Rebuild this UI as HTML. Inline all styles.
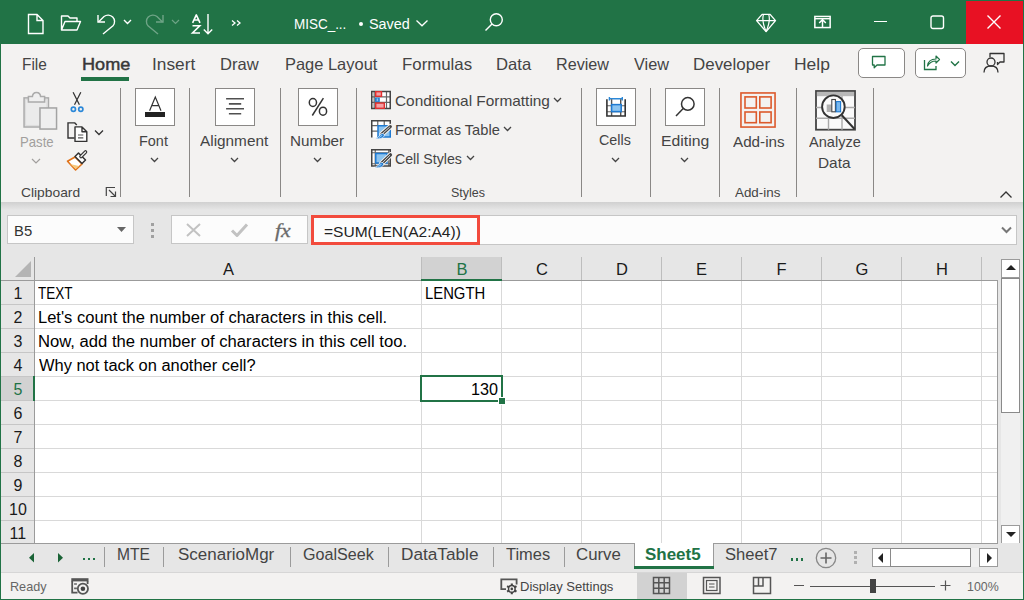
<!DOCTYPE html>
<html><head><meta charset="utf-8"><style>
html,body{margin:0;padding:0;}
body{width:1024px;height:600px;position:relative;overflow:hidden;background:#217346;font-family:"Liberation Sans",sans-serif;}
.t{position:absolute;line-height:1;white-space:nowrap;transform-origin:0 0;}
svg{overflow:visible}
</style></head><body>
<div style="position:absolute;left:0px;top:0px;width:1024px;height:44px;background:#217346"></div>
<svg style="position:absolute;left:27px;top:13px" width="18" height="22" viewBox="0 0 18 22"><path d="M1.5 1.5 H10 L16 7.5 V20.5 H1.5 Z M10 1.5 V7.5 H16" fill="none" stroke="#fff" stroke-width="1.4"/></svg>
<svg style="position:absolute;left:60px;top:14px" width="22" height="18" viewBox="0 0 22 18"><path d="M1.5 16 V2 H8 L10 4 H17 V7.5 M1.5 16 L5 7.5 H20.5 L17 16 Z" fill="none" stroke="#fff" stroke-width="1.4" stroke-linejoin="round"/></svg>
<svg style="position:absolute;left:96px;top:13px" width="21" height="22" viewBox="0 0 21 22"><path d="M2 2 V9 H9" fill="none" stroke="#fff" stroke-width="1.4"/><path d="M2.5 9 L8 3.5 A6.5 6.5 0 0 1 17 12.8 L7 21" fill="none" stroke="#fff" stroke-width="1.4"/></svg>
<svg style="position:absolute;left:123px;top:19px" width="9" height="6" viewBox="0 0 9 6"><path d="M1 1 L4.5 4.5 L8 1" fill="none" stroke="#fff" stroke-width="1.4"/></svg>
<svg style="position:absolute;left:144px;top:13px" width="21" height="22" viewBox="0 0 21 22"><g opacity="0.35"><path d="M19 2 V9 H12" fill="none" stroke="#fff" stroke-width="1.4"/><path d="M18.5 9 L13 3.5 A6.5 6.5 0 0 0 4 12.8 L14 21" fill="none" stroke="#fff" stroke-width="1.4"/></g></svg>
<svg style="position:absolute;left:171px;top:19px" width="9" height="6" viewBox="0 0 9 6"><path d="M1 1 L4.5 4.5 L8 1" fill="none" stroke="#fff" stroke-opacity="0.35" stroke-width="1.2"/></svg>
<svg style="position:absolute;left:190px;top:12px" width="24" height="24" viewBox="0 0 24 24"><path d="M2.6 10.8 L6.3 2.9 L10 10.8 M3.9 8 H8.7" fill="none" stroke="#fff" stroke-width="1.6" stroke-linejoin="round"/><path d="M2.5 13.8 H9.8 L2.5 21 H10" fill="none" stroke="#fff" stroke-width="1.6"/><path d="M18 2 V21.5 M13.8 17.5 L18 21.8 L22.2 17.5" fill="none" stroke="#fff" stroke-width="1.4"/></svg>
<svg style="position:absolute;left:231px;top:19px" width="11" height="8" viewBox="0 0 11 8"><path d="M1 1.5 L4 4 L1 6.5 M6 1.5 L9 4 L6 6.5" fill="none" stroke="#fff" stroke-width="1.3"/></svg>
<div class="t" style="left:294.28px;top:17.00px;font-size:14.7px;color:#ffffff;font-weight:400;font-style:normal;transform:scaleX(0.9164);">MISC_...</div>
<div style="position:absolute;left:359px;top:22.3px;width:4.2px;height:4.2px;background:#fff;border-radius:50%"></div>
<div class="t" style="left:369.22px;top:17.00px;font-size:14.7px;color:#ffffff;font-weight:400;font-style:normal;transform:scaleX(0.9800);">Saved</div>
<svg style="position:absolute;left:415px;top:19px" width="14" height="9" viewBox="0 0 14 9"><path d="M1.5 1.5 L7 6.8 L12.5 1.5" fill="none" stroke="#fff" stroke-width="1.3"/></svg>
<svg style="position:absolute;left:484px;top:12px" width="20" height="20" viewBox="0 0 20 20"><circle cx="12.3" cy="7.7" r="6" fill="none" stroke="#fff" stroke-width="1.4"/><path d="M8 12 L1.5 18.5" stroke="#fff" stroke-width="1.5"/></svg>
<svg style="position:absolute;left:750px;top:8px" width="32" height="28" viewBox="0 0 32 28"><path d="M12.1 6.4 H20.1 L25.5 12.6 L16.1 23.6 L6.6 12.6 Z M6.6 12.6 H25.5" fill="none" stroke="#fff" stroke-width="1.35" stroke-linejoin="round"/><path d="M13.5 6.4 Q11.4 12.6 16.1 23.4 M18.7 6.4 Q20.8 12.6 16.1 23.4" fill="none" stroke="#fff" stroke-width="1.2"/></svg>
<svg style="position:absolute;left:805px;top:8px" width="35" height="28" viewBox="0 0 35 28"><rect x="9.85" y="8.45" width="15.3" height="11.1" fill="none" stroke="#fff" stroke-width="1.5"/><path d="M9.85 10.7 H25.15" stroke="#fff" stroke-width="1.4"/><path d="M17.5 20 V11.6 M14.2 15 L17.5 11.6 L20.8 15" fill="none" stroke="#fff" stroke-width="1.5"/></svg>
<div style="position:absolute;left:874px;top:21px;width:13px;height:1.3px;background:#fff"></div>
<svg style="position:absolute;left:930px;top:15px" width="15" height="15" viewBox="0 0 15 15"><rect x="1" y="1" width="12.5" height="12.5" rx="2" fill="none" stroke="#fff" stroke-width="1.4"/></svg>
<div style="position:absolute;left:966px;top:1px;width:57px;height:43px;background:#e81123"></div>
<svg style="position:absolute;left:986px;top:14px" width="16" height="16" viewBox="0 0 16 16"><path d="M1.5 1.5 L14.5 14.5 M14.5 1.5 L1.5 14.5" stroke="#fff" stroke-width="1.4"/></svg>
<div style="position:absolute;left:1px;top:44px;width:1022px;height:158px;background:#f3f2f1"></div>
<div class="t" style="left:21.86px;top:56.00px;font-size:16.5px;color:#444444;font-weight:400;font-style:normal;transform:scaleX(0.9360);">File</div>
<div class="t" style="left:152.15px;top:56.00px;font-size:16.5px;color:#444444;font-weight:400;font-style:normal;transform:scaleX(1.0475);">Insert</div>
<div class="t" style="left:219.60px;top:56.00px;font-size:16.5px;color:#444444;font-weight:400;font-style:normal;transform:scaleX(1.0026);">Draw</div>
<div class="t" style="left:284.60px;top:56.00px;font-size:16.5px;color:#444444;font-weight:400;font-style:normal;transform:scaleX(0.9967);">Page Layout</div>
<div class="t" style="left:402.48px;top:56.00px;font-size:16.5px;color:#444444;font-weight:400;font-style:normal;transform:scaleX(1.0194);">Formulas</div>
<div class="t" style="left:495.69px;top:56.00px;font-size:16.5px;color:#444444;font-weight:400;font-style:normal;transform:scaleX(1.0088);">Data</div>
<div class="t" style="left:555.72px;top:56.00px;font-size:16.5px;color:#444444;font-weight:400;font-style:normal;transform:scaleX(0.9792);">Review</div>
<div class="t" style="left:633.50px;top:56.00px;font-size:16.5px;color:#444444;font-weight:400;font-style:normal;transform:scaleX(0.9861);">View</div>
<div class="t" style="left:692.67px;top:56.00px;font-size:16.5px;color:#444444;font-weight:400;font-style:normal;transform:scaleX(1.0257);">Developer</div>
<div class="t" style="left:793.54px;top:56.00px;font-size:16.5px;color:#444444;font-weight:400;font-style:normal;transform:scaleX(1.0594);">Help</div>
<div class="t" style="left:81.50px;top:56.00px;font-size:16.5px;color:#383838;font-weight:400;font-style:normal;transform:scaleX(1.0976);-webkit-text-stroke:0.45px #383838;">Home</div>
<div style="position:absolute;left:81px;top:77px;width:48px;height:4px;background:#217346"></div>
<div style="position:absolute;left:858px;top:48px;width:47px;height:30px;box-sizing:border-box;border:1px solid #8a8886;border-radius:5px;background:#fff"></div>
<svg style="position:absolute;left:871px;top:55px" width="16" height="15" viewBox="0 0 16 15"><path d="M1.5 1.5 H14 V10 H6 L3.2 12.8 V10 H1.5 Z" fill="none" stroke="#217346" stroke-width="1.3" stroke-linejoin="round"/></svg>
<div style="position:absolute;left:915px;top:48px;width:51px;height:30px;box-sizing:border-box;border:1px solid #8a8886;border-radius:5px;background:#fff"></div>
<svg style="position:absolute;left:923px;top:54px" width="18" height="17" viewBox="0 0 18 17"><path d="M1.5 6 V15.5 H13 V12" fill="none" stroke="#217346" stroke-width="1.3"/><path d="M4.5 12 C5 7 8 5 13 5 V2 L16.5 5.5 L13 9 V7 C9 7 6.5 8.5 4.5 12 Z" fill="none" stroke="#217346" stroke-width="1.2" stroke-linejoin="round"/></svg>
<svg style="position:absolute;left:950px;top:60px" width="10" height="7" viewBox="0 0 10 7"><path d="M1 1.5 L5 5.5 L9 1.5" fill="none" stroke="#217346" stroke-width="1.4"/></svg>
<svg style="position:absolute;left:983px;top:52px" width="23" height="22" viewBox="0 0 23 22"><circle cx="8" cy="10" r="4" fill="none" stroke="#333" stroke-width="1.3"/><path d="M1 20.5 C1 15.5 4 14 8 14 C12 14 15 15.5 15 20.5" fill="none" stroke="#333" stroke-width="1.3"/><path d="M7 5 V1.5 H21 V10 H17 L14.5 12.5 V10" fill="none" stroke="#333" stroke-width="1.3" stroke-linejoin="round"/></svg>
<div style="position:absolute;left:120px;top:88px;width:1px;height:109px;background:#8a8886"></div>
<div style="position:absolute;left:189px;top:88px;width:1px;height:109px;background:#8a8886"></div>
<div style="position:absolute;left:280px;top:88px;width:1px;height:109px;background:#8a8886"></div>
<div style="position:absolute;left:356px;top:88px;width:1px;height:109px;background:#8a8886"></div>
<div style="position:absolute;left:581px;top:88px;width:1px;height:109px;background:#8a8886"></div>
<div style="position:absolute;left:650px;top:88px;width:1px;height:109px;background:#8a8886"></div>
<div style="position:absolute;left:719px;top:88px;width:1px;height:109px;background:#8a8886"></div>
<div style="position:absolute;left:796px;top:88px;width:1px;height:109px;background:#8a8886"></div>
<div style="position:absolute;left:873px;top:88px;width:1px;height:109px;background:#8a8886"></div>
<svg style="position:absolute;left:15px;top:86px" width="50" height="50" viewBox="0 0 50 50"><rect x="9.05" y="11.9" width="24.4" height="29.1" fill="#ebebeb" stroke="#ababab" stroke-width="1.5"/><rect x="10.6" y="13.4" width="21.3" height="26" fill="none" stroke="#dcdcdc" stroke-width="1"/><path d="M13.4 16 V10.6 H17.4 C17.6 7.6 19.5 6.4 21.5 6.4 C23.5 6.4 25.4 7.6 25.6 10.6 H29.6 V16 Z" fill="#efefef" stroke="#ababab" stroke-width="1.5"/><rect x="24.95" y="21.95" width="16.6" height="21.1" fill="#efefef" stroke="#a3a3a3" stroke-width="1.5"/></svg>
<div class="t" style="left:20.11px;top:135.00px;font-size:14.8px;color:#a19f9d;font-weight:400;font-style:normal;transform:scaleX(0.8889);">Paste</div>
<svg style="position:absolute;left:31px;top:158px" width="10" height="6" viewBox="0 0 10 6"><path d="M1 1 L5 5 L9 1" fill="none" stroke="#a19f9d" stroke-width="1.2"/></svg>
<svg style="position:absolute;left:62px;top:88px" width="30" height="30" viewBox="0 0 30 30"><path d="M11.1 4.3 L17.4 16.8 M18.8 4.3 L12.5 16.8" stroke="#333" stroke-width="1.25" fill="none"/><circle cx="11.4" cy="21.3" r="2.1" fill="none" stroke="#2b88d8" stroke-width="1.7"/><circle cx="18.8" cy="21.3" r="2.1" fill="none" stroke="#2b88d8" stroke-width="1.7"/></svg>
<svg style="position:absolute;left:62px;top:88px" width="30" height="58" viewBox="0 0 30 58"><path d="M12.5 50 H6 V34.9 H12.8 L14.8 37" fill="none" stroke="#333" stroke-width="1.4"/><path d="M13 38.9 H20 L24.8 43.7 V53.4 H13 Z M20 38.9 V43.7 H24.8" fill="#fff" stroke="#333" stroke-width="1.4" stroke-linejoin="round"/><path d="M16 47 H21.3 M16 49.9 H21.3" stroke="#555" stroke-width="1.2"/></svg>
<svg style="position:absolute;left:94px;top:129px" width="10" height="7" viewBox="0 0 10 7"><path d="M1 1.5 L5 5.5 L9 1.5" fill="none" stroke="#333" stroke-width="1.3"/></svg>
<svg style="position:absolute;left:64px;top:148px" width="26" height="26" viewBox="0 0 26 26"><path d="M3.5 13.2 L11 9 L18 16 L11.6 22 Z" fill="#fff" stroke="#e0731a" stroke-width="1.6" stroke-linejoin="round"/><path d="M6 16 L15 18 L11.6 21 Z" fill="#f7c97e"/><path d="M11 8.5 L14.5 5 L21.5 12 L18 15.5 Z" fill="#fff" stroke="#333" stroke-width="1.5" stroke-linejoin="round"/><path d="M17 8.5 L21.5 4" stroke="#333" stroke-width="3.6" stroke-linecap="round"/><path d="M17 8.5 L21.5 4" stroke="#f3f2f1" stroke-width="1.2" stroke-linecap="round"/></svg>
<div class="t" style="left:20.50px;top:187.00px;font-size:12.6px;color:#444444;font-weight:400;font-style:normal;transform:scaleX(1.0962);">Clipboard</div>
<svg style="position:absolute;left:104px;top:185px" width="14" height="14" viewBox="0 0 14 14"><path d="M2.3 11 V2.5 H11" fill="none" stroke="#444" stroke-width="1.2"/><path d="M5 5 L11.5 11.5 M6.5 11.5 H11.5 V6.5" fill="none" stroke="#444" stroke-width="1.2"/></svg>
<div style="position:absolute;left:135px;top:88px;width:40px;height:38px;box-sizing:border-box;border:1px solid #8a8886;background:#fff"></div>
<svg style="position:absolute;left:145px;top:96px" width="21" height="22" viewBox="0 0 21 22"><path d="M4.6 14.8 L10.3 1 L16 14.8 M6.8 9.6 H13.8" fill="none" stroke="#333" stroke-width="1.2"/><rect x="0" y="16" width="20" height="5" fill="#222"/></svg>
<div class="t" style="left:139.42px;top:134.00px;font-size:14.8px;color:#444444;font-weight:400;font-style:normal;transform:scaleX(0.9759);">Font</div>
<svg style="position:absolute;left:150.0px;top:157px" width="9" height="6" viewBox="0 0 9 6"><path d="M1 1 L4.5 4.5 L8 1" fill="none" stroke="#444" stroke-width="1.3"/></svg>
<div style="position:absolute;left:215px;top:88px;width:40px;height:38px;box-sizing:border-box;border:1px solid #8a8886;background:#fff"></div>
<svg style="position:absolute;left:210px;top:86px" width="50" height="42" viewBox="0 0 50 42"><path d="M16.1 12.8 H34 M18.9 17.9 H31.2 M16.1 22.8 H34 M18.9 27.8 H31.2" stroke="#505050" stroke-width="1.6"/></svg>
<div class="t" style="left:200.40px;top:134.00px;font-size:14.8px;color:#444444;font-weight:400;font-style:normal;transform:scaleX(1.0364);">Alignment</div>
<svg style="position:absolute;left:230.0px;top:157px" width="9" height="6" viewBox="0 0 9 6"><path d="M1 1 L4.5 4.5 L8 1" fill="none" stroke="#444" stroke-width="1.3"/></svg>
<div style="position:absolute;left:298px;top:88px;width:40px;height:38px;box-sizing:border-box;border:1px solid #8a8886;background:#fff"></div>
<svg style="position:absolute;left:295px;top:86px" width="50" height="42" viewBox="0 0 50 42"><ellipse cx="17.9" cy="16.5" rx="3.6" ry="4" fill="none" stroke="#333" stroke-width="1.5"/><ellipse cx="28" cy="25.2" rx="3.6" ry="4" fill="none" stroke="#333" stroke-width="1.5"/><path d="M17.3 29.5 L28.4 12.2" stroke="#333" stroke-width="1.5"/></svg>
<div class="t" style="left:290.47px;top:134.00px;font-size:14.8px;color:#444444;font-weight:400;font-style:normal;transform:scaleX(1.0288);">Number</div>
<svg style="position:absolute;left:313.0px;top:157px" width="9" height="6" viewBox="0 0 9 6"><path d="M1 1 L4.5 4.5 L8 1" fill="none" stroke="#444" stroke-width="1.3"/></svg>
<svg style="position:absolute;left:366px;top:86px" width="30" height="30" viewBox="0 0 30 30"><rect x="5.75" y="5.5" width="18.5" height="17" fill="#fff"/><path d="M5.75 10.9 H24.25 M5.75 16.3 H24.25 M8.2 5.5 V22.5 M20.5 5.5 V22.5" stroke="#666" stroke-width="1.2"/><rect x="5.75" y="5.5" width="18.5" height="17" fill="none" stroke="#444" stroke-width="1.5"/><rect x="9.7" y="5.7" width="5.8" height="4.6" fill="#f4a0a5" stroke="#e03030" stroke-width="1.4"/><rect x="9.7" y="17.1" width="8.6" height="5.2" fill="#f4a0a5" stroke="#e03030" stroke-width="1.4"/><rect x="9" y="11.6" width="4.8" height="4.3" fill="#1f7ad1"/><rect x="10.6" y="12.4" width="1.6" height="2.7" fill="#8cc4f0"/></svg>
<div class="t" style="left:394.66px;top:93.70px;font-size:14.8px;color:#444444;font-weight:400;font-style:normal;transform:scaleX(1.0408);">Conditional Formatting</div>
<svg style="position:absolute;left:553.0px;top:97px" width="9" height="6" viewBox="0 0 9 6"><path d="M1 1 L4.5 4.5 L8 1" fill="none" stroke="#444" stroke-width="1.3"/></svg>
<svg style="position:absolute;left:366px;top:115px" width="30" height="30" viewBox="0 0 30 30"><rect x="5.75" y="5.75" width="18.5" height="16.5" fill="#fff"/><path d="M5.75 10.6 H12 M5.75 16.1 H12 M12 10.6 H24.25 M11.75 5.75 V10.6 M18.25 5.75 V10.6" stroke="#666" stroke-width="1.2"/><path d="M5.75 22.6 V5.75 H24.25 V10.6" fill="none" stroke="#444" stroke-width="1.5"/><rect x="12" y="10.75" width="12.25" height="11.25" fill="#8cc4f0" stroke="#1f7ad1" stroke-width="1.5"/><path d="M16 19 L24.3 11.6" stroke="#f3f2f1" stroke-width="5.2" stroke-linecap="round"/><path d="M16 19 L24.3 11.6" stroke="#444" stroke-width="3.2" stroke-linecap="round"/><path d="M16.5 18.6 L23.8 12" stroke="#ddd" stroke-width="1"/><path d="M8.5 23.4 C11 23.4 12.8 22 14.2 19.6 C15.2 18.3 17 18 18.2 19.2 C18.8 20.5 17.8 22 16.2 22.9 C13.6 24.1 11 24 8.5 23.4 Z" fill="#1f7ad1" stroke="#fff" stroke-width="0.7"/><path d="M13 22.4 C14.5 21.6 15.5 20.6 16.2 19.8" stroke="#8cc4f0" stroke-width="1.1" fill="none"/></svg>
<div class="t" style="left:394.71px;top:122.50px;font-size:14.8px;color:#444444;font-weight:400;font-style:normal;transform:scaleX(0.9904);">Format as Table</div>
<svg style="position:absolute;left:502.5px;top:126px" width="9" height="6" viewBox="0 0 9 6"><path d="M1 1 L4.5 4.5 L8 1" fill="none" stroke="#444" stroke-width="1.3"/></svg>
<svg style="position:absolute;left:366px;top:144px" width="30" height="30" viewBox="0 0 30 30"><rect x="5.75" y="5.75" width="18.5" height="16.25" fill="#fff"/><path d="M5.75 8.75 H24.25 M5.75 19.75 H24.25 M9.25 5.75 V22 M22.75 5.75 V22" stroke="#666" stroke-width="1.2"/><rect x="5.75" y="5.75" width="18.5" height="16.25" fill="none" stroke="#444" stroke-width="1.5"/><rect x="9.75" y="9.5" width="11.25" height="9.5" fill="#8cc4f0" stroke="#1f7ad1" stroke-width="1.5"/><path d="M15.5 19.5 L24.5 10.8" stroke="#f3f2f1" stroke-width="5.2" stroke-linecap="round"/><path d="M15.5 19.5 L24.5 10.8" stroke="#444" stroke-width="3.2" stroke-linecap="round"/><path d="M16 19.1 L24 11.2" stroke="#ddd" stroke-width="1"/><path d="M7.8 23.4 C10.3 23.4 12.1 22 13.5 19.6 C14.5 18.3 16.3 18 17.5 19.2 C18.1 20.5 17.1 22 15.5 22.9 C12.9 24.1 10.3 24 7.8 23.4 Z" fill="#1f7ad1" stroke="#fff" stroke-width="0.7"/><path d="M12.3 22.4 C13.8 21.6 14.8 20.6 15.5 19.8" stroke="#8cc4f0" stroke-width="1.1" fill="none"/></svg>
<div class="t" style="left:394.74px;top:151.70px;font-size:14.8px;color:#444444;font-weight:400;font-style:normal;transform:scaleX(0.9580);">Cell Styles</div>
<svg style="position:absolute;left:466.0px;top:155px" width="9" height="6" viewBox="0 0 9 6"><path d="M1 1 L4.5 4.5 L8 1" fill="none" stroke="#444" stroke-width="1.3"/></svg>
<div class="t" style="left:451.01px;top:186.50px;font-size:12.6px;color:#444444;font-weight:400;font-style:normal;transform:scaleX(0.9909);">Styles</div>
<div style="position:absolute;left:596px;top:88px;width:40px;height:38px;box-sizing:border-box;border:1px solid #8a8886;background:#fff"></div>
<svg style="position:absolute;left:596px;top:88px" width="40" height="38" viewBox="0 0 40 38"><path d="M13.4 10.7 H26.3 M13.4 9.1 V12.4 M26.3 9.1 V12.4" stroke="#2b88d8" stroke-width="1.4" fill="none"/><path d="M10.9 17.7 H29.2 M10.9 23.8 H29.2" stroke="#666" stroke-width="1.1"/><path d="M15.6 11.3 V28 M24.7 11.3 V28" stroke="#555" stroke-width="1.4"/><path d="M10.9 11.3 V28 H29.2 V11.3" fill="none" stroke="#333" stroke-width="1.6"/><rect x="15.6" y="16.6" width="9.6" height="7" fill="#8cc4f0" stroke="#1f7ad1" stroke-width="1.5"/></svg>
<div class="t" style="left:599.03px;top:133.40px;font-size:14.8px;color:#444444;font-weight:400;font-style:normal;transform:scaleX(0.9688);">Cells</div>
<svg style="position:absolute;left:611.0px;top:156.5px" width="9" height="6" viewBox="0 0 9 6"><path d="M1 1 L4.5 4.5 L8 1" fill="none" stroke="#444" stroke-width="1.3"/></svg>
<div style="position:absolute;left:665px;top:88px;width:40px;height:38px;box-sizing:border-box;border:1px solid #8a8886;background:#fff"></div>
<svg style="position:absolute;left:596px;top:88px" width="110" height="38" viewBox="0 0 110 38"><circle cx="91.8" cy="15.9" r="6.3" fill="none" stroke="#333" stroke-width="1.5"/><path d="M87.2 20.6 L80 28" stroke="#333" stroke-width="1.5"/></svg>
<div class="t" style="left:660.53px;top:134.00px;font-size:14.8px;color:#444444;font-weight:400;font-style:normal;transform:scaleX(1.0651);">Editing</div>
<svg style="position:absolute;left:680.0px;top:156.5px" width="9" height="6" viewBox="0 0 9 6"><path d="M1 1 L4.5 4.5 L8 1" fill="none" stroke="#444" stroke-width="1.3"/></svg>
<svg style="position:absolute;left:735px;top:86px" width="40" height="44" viewBox="0 0 40 44"><g fill="none" stroke="#dc5a2c" stroke-width="1.6"><rect x="5.95" y="6.95" width="34.1" height="34.1"/><rect x="10" y="10.9" width="11.3" height="11.1"/><rect x="24.8" y="10.9" width="11.3" height="11.1"/><rect x="10" y="26" width="11.3" height="10.7"/><rect x="24.8" y="26" width="11.3" height="10.7"/></g></svg>
<div class="t" style="left:732.60px;top:135.40px;font-size:14.8px;color:#444444;font-weight:400;font-style:normal;transform:scaleX(1.0280);">Add-ins</div>
<div class="t" style="left:735.00px;top:186.50px;font-size:12.6px;color:#444444;font-weight:400;font-style:normal;transform:scaleX(1.0619);">Add-ins</div>
<svg style="position:absolute;left:735px;top:86px" width="126" height="48" viewBox="0 0 126 48"><rect x="81" y="5" width="39" height="38.7" fill="#fafafa" stroke="#444" stroke-width="1.8"/><rect x="81.9" y="5.9" width="37.2" height="4.3" fill="#b8b8b8"/><path d="M81 21.5 H120 M81 32.2 H120 M93.5 10 V43.7 M107 10 V43.7" stroke="#aaa" stroke-width="1.4"/><circle cx="98.4" cy="20.7" r="11.3" fill="#fafafa" stroke="#333" stroke-width="1.9"/><rect x="91.7" y="18.5" width="4.9" height="7.5" fill="#b0b0b0"/><rect x="96.8" y="13.5" width="3.6" height="12.3" fill="#fff" stroke="#444" stroke-width="1.1"/><rect x="101.2" y="15.6" width="4.4" height="10.2" fill="#79b8ee" stroke="#1f7ad1" stroke-width="1.1"/><path d="M106.8 29.3 L119.5 43" stroke="#333" stroke-width="2"/></svg>
<div class="t" style="left:809.40px;top:135.40px;font-size:14.8px;color:#444444;font-weight:400;font-style:normal;transform:scaleX(0.9846);">Analyze</div>
<div class="t" style="left:818.36px;top:155.60px;font-size:14.8px;color:#444444;font-weight:400;font-style:normal;transform:scaleX(1.0400);">Data</div>
<svg style="position:absolute;left:999px;top:189.5px" width="14" height="9" viewBox="0 0 14 9"><path d="M1.5 7.5 L7 2 L12.5 7.5" fill="none" stroke="#333" stroke-width="1.3"/></svg>
<div style="position:absolute;left:1px;top:202px;width:1022px;height:55px;background:#e6e6e6"></div>
<div style="position:absolute;left:1px;top:202px;width:1022px;height:8px;background:linear-gradient(#d0d0d0,#e6e6e6)"></div>
<div style="position:absolute;left:7px;top:215px;width:127px;height:29px;box-sizing:border-box;border:1px solid #c6c6c6;background:#fcfcfc"></div>
<div class="t" style="left:14.21px;top:222.80px;font-size:15px;color:#333;font-weight:400;font-style:normal;transform:scaleX(0.9882);">B5</div>
<svg style="position:absolute;left:117px;top:227px" width="9" height="5" viewBox="0 0 9 5"><path d="M0 0 H9 L4.5 5 Z" fill="#666"/></svg>
<div style="position:absolute;left:151px;top:223px;width:3px;height:3px;background:#a0a0a0"></div>
<div style="position:absolute;left:151px;top:229px;width:3px;height:3px;background:#a0a0a0"></div>
<div style="position:absolute;left:151px;top:235px;width:3px;height:3px;background:#a0a0a0"></div>
<div style="position:absolute;left:171px;top:215px;width:137px;height:29px;box-sizing:border-box;border:1px solid #c6c6c6;background:#fcfcfc"></div>
<svg style="position:absolute;left:185px;top:222px" width="17" height="16" viewBox="0 0 17 16"><path d="M2 2 L15 14 M15 2 L2 14" stroke="#c2c2c2" stroke-width="2"/></svg>
<svg style="position:absolute;left:230px;top:222px" width="19" height="16" viewBox="0 0 19 16"><path d="M2 8.5 L7 13.5 L17 2.5" fill="none" stroke="#c2c2c2" stroke-width="3" stroke-linejoin="round"/></svg>
<div class="t" style="left:275.30px;top:220.50px;font-size:19.5px;color:#6a6a6a;font-weight:400;font-style:italic;font-family:'Liberation Serif';transform:scaleX(1.1214);-webkit-text-stroke:0.3px #6a6a6a;">fx</div>
<div style="position:absolute;left:311px;top:215px;width:706px;height:30px;box-sizing:border-box;border:1px solid #c6c6c6;background:#fcfcfc"></div>
<div style="position:absolute;left:311px;top:215px;width:168.5px;height:30px;box-sizing:border-box;border:3px solid #f24b3d"></div>
<div class="t" style="left:324.38px;top:223.50px;font-size:15.3px;color:#222;font-weight:400;font-style:normal;transform:scaleX(1.0158);">=SUM(LEN(A2:A4))</div>
<svg style="position:absolute;left:1001px;top:226px" width="11" height="8" viewBox="0 0 11 8"><path d="M1 1.5 L5.5 6 L10 1.5" fill="none" stroke="#777" stroke-width="2"/></svg>
<div style="position:absolute;left:1px;top:257px;width:1022px;height:286px;background:#e6e6e6"></div>
<div style="position:absolute;left:35px;top:281px;width:962px;height:262px;background:#fff"></div>
<div style="position:absolute;left:422px;top:257px;width:79px;height:23px;background:#d2d2d2"></div>
<div style="position:absolute;left:34px;top:257px;width:1px;height:23px;background:#bdbdbd"></div>
<div style="position:absolute;left:421px;top:257px;width:1px;height:23px;background:#bdbdbd"></div>
<div style="position:absolute;left:501px;top:257px;width:1px;height:23px;background:#bdbdbd"></div>
<div style="position:absolute;left:581px;top:257px;width:1px;height:23px;background:#bdbdbd"></div>
<div style="position:absolute;left:661px;top:257px;width:1px;height:23px;background:#bdbdbd"></div>
<div style="position:absolute;left:741px;top:257px;width:1px;height:23px;background:#bdbdbd"></div>
<div style="position:absolute;left:821px;top:257px;width:1px;height:23px;background:#bdbdbd"></div>
<div style="position:absolute;left:901px;top:257px;width:1px;height:23px;background:#bdbdbd"></div>
<div style="position:absolute;left:981px;top:257px;width:1px;height:23px;background:#bdbdbd"></div>
<div style="position:absolute;left:34px;top:257px;width:1px;height:286px;background:#9b9b9b"></div>
<div style="position:absolute;left:1px;top:280px;width:996px;height:1px;background:#9b9b9b"></div>
<div style="position:absolute;left:421px;top:279px;width:81px;height:2px;background:#217346"></div>
<div style="position:absolute;left:421px;top:281px;width:1px;height:262px;background:#d9d9d9"></div>
<div style="position:absolute;left:501px;top:281px;width:1px;height:262px;background:#d9d9d9"></div>
<div style="position:absolute;left:581px;top:281px;width:1px;height:262px;background:#d9d9d9"></div>
<div style="position:absolute;left:661px;top:281px;width:1px;height:262px;background:#d9d9d9"></div>
<div style="position:absolute;left:741px;top:281px;width:1px;height:262px;background:#d9d9d9"></div>
<div style="position:absolute;left:821px;top:281px;width:1px;height:262px;background:#d9d9d9"></div>
<div style="position:absolute;left:901px;top:281px;width:1px;height:262px;background:#d9d9d9"></div>
<div style="position:absolute;left:981px;top:281px;width:1px;height:262px;background:#d9d9d9"></div>
<div style="position:absolute;left:35px;top:304px;width:962px;height:1px;background:#d9d9d9"></div>
<div style="position:absolute;left:1px;top:304px;width:33px;height:1px;background:#c6c6c6"></div>
<div style="position:absolute;left:35px;top:328px;width:962px;height:1px;background:#d9d9d9"></div>
<div style="position:absolute;left:1px;top:328px;width:33px;height:1px;background:#c6c6c6"></div>
<div style="position:absolute;left:35px;top:352px;width:962px;height:1px;background:#d9d9d9"></div>
<div style="position:absolute;left:1px;top:352px;width:33px;height:1px;background:#c6c6c6"></div>
<div style="position:absolute;left:35px;top:376px;width:962px;height:1px;background:#d9d9d9"></div>
<div style="position:absolute;left:1px;top:376px;width:33px;height:1px;background:#c6c6c6"></div>
<div style="position:absolute;left:35px;top:400px;width:962px;height:1px;background:#d9d9d9"></div>
<div style="position:absolute;left:1px;top:400px;width:33px;height:1px;background:#c6c6c6"></div>
<div style="position:absolute;left:35px;top:424px;width:962px;height:1px;background:#d9d9d9"></div>
<div style="position:absolute;left:1px;top:424px;width:33px;height:1px;background:#c6c6c6"></div>
<div style="position:absolute;left:35px;top:448px;width:962px;height:1px;background:#d9d9d9"></div>
<div style="position:absolute;left:1px;top:448px;width:33px;height:1px;background:#c6c6c6"></div>
<div style="position:absolute;left:35px;top:472px;width:962px;height:1px;background:#d9d9d9"></div>
<div style="position:absolute;left:1px;top:472px;width:33px;height:1px;background:#c6c6c6"></div>
<div style="position:absolute;left:35px;top:496px;width:962px;height:1px;background:#d9d9d9"></div>
<div style="position:absolute;left:1px;top:496px;width:33px;height:1px;background:#c6c6c6"></div>
<div style="position:absolute;left:35px;top:520px;width:962px;height:1px;background:#d9d9d9"></div>
<div style="position:absolute;left:1px;top:520px;width:33px;height:1px;background:#c6c6c6"></div>
<div style="position:absolute;left:997px;top:280px;width:1px;height:263px;background:#9b9b9b"></div>
<svg style="position:absolute;left:15px;top:261px" width="17" height="17" viewBox="0 0 17 17"><path d="M16 0 V16 H0 Z" fill="#b4b4b4"/></svg>
<div class="t" style="left:223.00px;top:261.20px;font-size:16.5px;color:#1a1a1a;font-weight:400;font-style:normal;">A</div>
<div class="t" style="left:456.50px;top:261.20px;font-size:16.5px;color:#217346;font-weight:400;font-style:normal;">B</div>
<div class="t" style="left:536.00px;top:261.20px;font-size:16.5px;color:#1a1a1a;font-weight:400;font-style:normal;">C</div>
<div class="t" style="left:616.00px;top:261.20px;font-size:16.5px;color:#1a1a1a;font-weight:400;font-style:normal;">D</div>
<div class="t" style="left:696.00px;top:261.20px;font-size:16.5px;color:#1a1a1a;font-weight:400;font-style:normal;">E</div>
<div class="t" style="left:776.50px;top:261.20px;font-size:16.5px;color:#1a1a1a;font-weight:400;font-style:normal;">F</div>
<div class="t" style="left:855.50px;top:261.20px;font-size:16.5px;color:#1a1a1a;font-weight:400;font-style:normal;">G</div>
<div class="t" style="left:936.00px;top:261.20px;font-size:16.5px;color:#1a1a1a;font-weight:400;font-style:normal;">H</div>
<div style="position:absolute;left:1px;top:377px;width:33px;height:23px;background:#d2d2d2"></div>
<div style="position:absolute;left:33px;top:376px;width:2px;height:25px;background:#217346"></div>
<div class="t" style="left:13.50px;top:285.80px;font-size:16px;color:#1a1a1a;font-weight:400;font-style:normal;">1</div>
<div class="t" style="left:13.50px;top:309.80px;font-size:16px;color:#1a1a1a;font-weight:400;font-style:normal;">2</div>
<div class="t" style="left:13.50px;top:333.80px;font-size:16px;color:#1a1a1a;font-weight:400;font-style:normal;">3</div>
<div class="t" style="left:13.50px;top:357.80px;font-size:16px;color:#1a1a1a;font-weight:400;font-style:normal;">4</div>
<div class="t" style="left:13.50px;top:381.80px;font-size:16px;color:#217346;font-weight:400;font-style:normal;">5</div>
<div class="t" style="left:13.50px;top:405.80px;font-size:16px;color:#1a1a1a;font-weight:400;font-style:normal;">6</div>
<div class="t" style="left:13.50px;top:429.80px;font-size:16px;color:#1a1a1a;font-weight:400;font-style:normal;">7</div>
<div class="t" style="left:13.50px;top:453.80px;font-size:16px;color:#1a1a1a;font-weight:400;font-style:normal;">8</div>
<div class="t" style="left:13.50px;top:477.80px;font-size:16px;color:#1a1a1a;font-weight:400;font-style:normal;">9</div>
<div class="t" style="left:9.00px;top:501.80px;font-size:16px;color:#1a1a1a;font-weight:400;font-style:normal;">10</div>
<div class="t" style="left:9.50px;top:525.80px;font-size:16px;color:#1a1a1a;font-weight:400;font-style:normal;">11</div>
<div class="t" style="left:38.40px;top:285.80px;font-size:16px;color:#000;font-weight:400;font-style:normal;transform:scaleX(0.8439);">TEXT</div>
<div class="t" style="left:424.87px;top:285.80px;font-size:16px;color:#000;font-weight:400;font-style:normal;transform:scaleX(0.9270);">LENGTH</div>
<div class="t" style="left:38.47px;top:309.80px;font-size:16px;color:#000;font-weight:400;font-style:normal;transform:scaleX(1.0321);">Let's count the number of characters in this cell.</div>
<div class="t" style="left:38.46px;top:333.80px;font-size:16px;color:#000;font-weight:400;font-style:normal;transform:scaleX(1.0399);">Now, add the number of characters in this cell too.</div>
<div class="t" style="left:38.90px;top:357.60px;font-size:16px;color:#000;font-weight:400;font-style:normal;transform:scaleX(1.0275);">Why not tack on another cell?</div>
<div class="t" style="left:470.99px;top:381.80px;font-size:16px;color:#000;font-weight:400;font-style:normal;transform:scaleX(1.0120);">130</div>
<div style="position:absolute;left:420px;top:375px;width:83px;height:27px;box-sizing:border-box;border:2px solid #217346"></div>
<div style="position:absolute;left:498px;top:397px;width:6px;height:6px;background:#217346;border:1px solid #fff"></div>
<div style="position:absolute;left:998px;top:257px;width:25px;height:286px;background:#e6e6e6"></div>
<div style="position:absolute;left:1001px;top:278px;width:19px;height:247px;background:#f0f0f0"></div>
<div style="position:absolute;left:1001px;top:259px;width:19px;height:19px;box-sizing:border-box;border:1px solid #9b9b9b;background:#fff"></div>
<svg style="position:absolute;left:1006px;top:265px" width="10" height="5" viewBox="0 0 10 5"><path d="M0 5 L5 0 L10 5 Z" fill="#222"/></svg>
<div style="position:absolute;left:1001px;top:278px;width:19px;height:135px;box-sizing:border-box;border:1.5px solid #8a8a8a;background:#fff"></div>
<div style="position:absolute;left:1001px;top:525px;width:19px;height:19px;box-sizing:border-box;border:1px solid #9b9b9b;background:#fff"></div>
<svg style="position:absolute;left:1006px;top:532px" width="10" height="5" viewBox="0 0 10 5"><path d="M0 0 L5 5 L10 0 Z" fill="#222"/></svg>
<div style="position:absolute;left:1px;top:543px;width:1022px;height:29px;background:#e6e6e6"></div>
<div style="position:absolute;left:1px;top:543px;width:997px;height:1px;background:#9b9b9b"></div>
<svg style="position:absolute;left:29px;top:553px" width="5" height="10" viewBox="0 0 5 10"><path d="M5 0 V9.5 L0 4.75 Z" fill="#1a6336"/></svg>
<svg style="position:absolute;left:58px;top:553px" width="5" height="10" viewBox="0 0 5 10"><path d="M0 0 V9.5 L5 4.75 Z" fill="#1a6336"/></svg>
<div style="position:absolute;left:82.5px;top:557.5px;width:2.5px;height:2.5px;background:#217346"></div>
<div style="position:absolute;left:87.5px;top:557.5px;width:2.5px;height:2.5px;background:#217346"></div>
<div style="position:absolute;left:92.5px;top:557.5px;width:2.5px;height:2.5px;background:#217346"></div>
<div style="position:absolute;left:104px;top:547px;width:1px;height:20px;background:#9b9b9b"></div>
<div style="position:absolute;left:163px;top:547px;width:1px;height:20px;background:#9b9b9b"></div>
<div style="position:absolute;left:290px;top:547px;width:1px;height:20px;background:#9b9b9b"></div>
<div style="position:absolute;left:388px;top:547px;width:1px;height:20px;background:#9b9b9b"></div>
<div style="position:absolute;left:493px;top:547px;width:1px;height:20px;background:#9b9b9b"></div>
<div style="position:absolute;left:564px;top:547px;width:1px;height:20px;background:#9b9b9b"></div>
<div class="t" style="left:116.64px;top:546.20px;font-size:16.3px;color:#444;font-weight:400;font-style:normal;transform:scaleX(0.9576);">MTE</div>
<div class="t" style="left:177.56px;top:546.20px;font-size:16.3px;color:#444;font-weight:400;font-style:normal;transform:scaleX(1.0429);">ScenarioMgr</div>
<div class="t" style="left:302.81px;top:546.20px;font-size:16.3px;color:#444;font-weight:400;font-style:normal;transform:scaleX(0.9886);">GoalSeek</div>
<div class="t" style="left:400.54px;top:546.20px;font-size:16.3px;color:#444;font-weight:400;font-style:normal;transform:scaleX(1.0569);">DataTable</div>
<div class="t" style="left:506.20px;top:546.20px;font-size:16.3px;color:#444;font-weight:400;font-style:normal;transform:scaleX(1.0093);">Times</div>
<div class="t" style="left:576.27px;top:546.20px;font-size:16.3px;color:#444;font-weight:400;font-style:normal;transform:scaleX(1.0333);">Curve</div>
<div class="t" style="left:725.38px;top:546.20px;font-size:16.3px;color:#444;font-weight:400;font-style:normal;transform:scaleX(1.0180);">Sheet7</div>
<div style="position:absolute;left:634px;top:543px;width:80px;height:26px;background:#fff;box-sizing:border-box;border-left:1px solid #9b9b9b;border-right:1px solid #9b9b9b"></div>
<div style="position:absolute;left:634px;top:566px;width:80px;height:2.5px;background:#217346"></div>
<div class="t" style="left:645.16px;top:546.20px;font-size:16.3px;color:#217346;font-weight:700;font-style:normal;transform:scaleX(1.0423);">Sheet5</div>
<div style="position:absolute;left:790.5px;top:558px;width:2.5px;height:2.5px;background:#217346"></div>
<div style="position:absolute;left:795.5px;top:558px;width:2.5px;height:2.5px;background:#217346"></div>
<div style="position:absolute;left:800.5px;top:558px;width:2.5px;height:2.5px;background:#217346"></div>
<svg style="position:absolute;left:815px;top:547px" width="22" height="22" viewBox="0 0 22 22"><circle cx="11" cy="11" r="9.7" fill="none" stroke="#888" stroke-width="1.3"/><path d="M11 5.5 V16.5 M5.5 11 H16.5" stroke="#666" stroke-width="1.6"/></svg>
<div style="position:absolute;left:854px;top:551px;width:3px;height:3px;background:#b0b0b0"></div>
<div style="position:absolute;left:854px;top:556px;width:3px;height:3px;background:#b0b0b0"></div>
<div style="position:absolute;left:854px;top:561px;width:3px;height:3px;background:#b0b0b0"></div>
<div style="position:absolute;left:872px;top:548px;width:126px;height:19px;background:#f0f0f0"></div>
<div style="position:absolute;left:872px;top:548px;width:19px;height:19px;box-sizing:border-box;border:1px solid #9b9b9b;background:#fff"></div>
<svg style="position:absolute;left:878px;top:553px" width="5" height="10" viewBox="0 0 5 10"><path d="M5 0 V10 L0 5 Z" fill="#222"/></svg>
<div style="position:absolute;left:890px;top:548px;width:81px;height:19px;box-sizing:border-box;border:1.5px solid #8a8a8a;background:#fff"></div>
<div style="position:absolute;left:979px;top:548px;width:19px;height:19px;box-sizing:border-box;border:1px solid #9b9b9b;background:#fff"></div>
<svg style="position:absolute;left:987px;top:553px" width="5" height="10" viewBox="0 0 5 10"><path d="M0 0 V10 L5 5 Z" fill="#222"/></svg>
<div style="position:absolute;left:1px;top:572px;width:1022px;height:27px;background:#f3f2f1"></div>
<div style="position:absolute;left:1px;top:572px;width:1022px;height:1px;background:#d6d6d6"></div>
<div class="t" style="left:10.46px;top:580.90px;font-size:12.2px;color:#666;font-weight:400;font-style:normal;transform:scaleX(1.0353);">Ready</div>
<svg style="position:absolute;left:70px;top:577px" width="22" height="20" viewBox="0 0 22 20"><rect x="1.3" y="1.2" width="17.2" height="3.2" fill="#555"/><path d="M2.2 4 V15.6 H7.5 M17.6 4 V7" fill="none" stroke="#555" stroke-width="1.8"/><path d="M4.1 7 H6.9 M4.1 11.4 H6.9" stroke="#666" stroke-width="1.6"/><circle cx="12.9" cy="11.8" r="5.1" fill="#f3f2f1" stroke="#555" stroke-width="1.8"/><circle cx="12.9" cy="11.8" r="2.3" fill="#444"/></svg>
<svg style="position:absolute;left:495px;top:574px" width="26" height="24" viewBox="0 0 26 24"><path d="M11 15.2 H6.3 V5.3 H21.6 V10.5" fill="none" stroke="#555" stroke-width="1.8"/><circle cx="16.8" cy="14.9" r="5.5" fill="#f3f2f1"/><circle cx="16.8" cy="14.9" r="3.3" fill="none" stroke="#444" stroke-width="1.5"/><path d="M19.57 16.50 L21.48 17.60 M16.80 18.10 L16.80 20.30 M14.03 16.50 L12.12 17.60 M14.03 13.30 L12.12 12.20 M16.80 11.70 L16.80 9.50 M19.57 13.30 L21.48 12.20" stroke="#444" stroke-width="2.1"/><circle cx="16.8" cy="14.9" r="1.3" fill="#444"/></svg>
<div class="t" style="left:519.98px;top:580.80px;font-size:12.8px;color:#444;font-weight:400;font-style:normal;transform:scaleX(1.0178);">Display Settings</div>
<div style="position:absolute;left:637px;top:573px;width:50px;height:26px;background:#d2d2d2"></div>
<svg style="position:absolute;left:652px;top:576px" width="20" height="19" viewBox="0 0 20 19"><rect x="1.5" y="1.5" width="16" height="16" fill="none" stroke="#555" stroke-width="1.5"/><path d="M1.5 6.8 H17.5 M1.5 12.2 H17.5 M6.8 1.5 V17.5 M12.2 1.5 V17.5" stroke="#555" stroke-width="1.5"/></svg>
<svg style="position:absolute;left:702px;top:576px" width="20" height="19" viewBox="0 0 20 19"><rect x="1.5" y="1.5" width="16.5" height="16" fill="none" stroke="#555" stroke-width="1.5"/><rect x="4.5" y="4.5" width="10.5" height="10" fill="none" stroke="#555" stroke-width="1.2"/><path d="M7 8 H12.5 M7 11 H12.5" stroke="#555" stroke-width="1.2"/></svg>
<svg style="position:absolute;left:752px;top:576px" width="20" height="19" viewBox="0 0 20 19"><path d="M1.5 1.5 H18.5 V17.5 H1.5 Z M1.5 10 H11 V1.5 M6.5 1.5 V10" fill="none" stroke="#555" stroke-width="1.5"/></svg>
<div style="position:absolute;left:794px;top:584.5px;width:10px;height:1.3px;background:#555"></div>
<div style="position:absolute;left:810px;top:586px;width:125px;height:1px;background:#555"></div>
<div style="position:absolute;left:870px;top:579px;width:6px;height:14px;background:#444"></div>
<svg style="position:absolute;left:940px;top:580px" width="11" height="11" viewBox="0 0 11 11"><path d="M5.5 0.5 V10.5 M0.5 5.5 H10.5" stroke="#555" stroke-width="1.2"/></svg>
<div class="t" style="left:967.03px;top:580.80px;font-size:12.8px;color:#666;font-weight:400;font-style:normal;transform:scaleX(0.9677);">100%</div>
</body></html>
